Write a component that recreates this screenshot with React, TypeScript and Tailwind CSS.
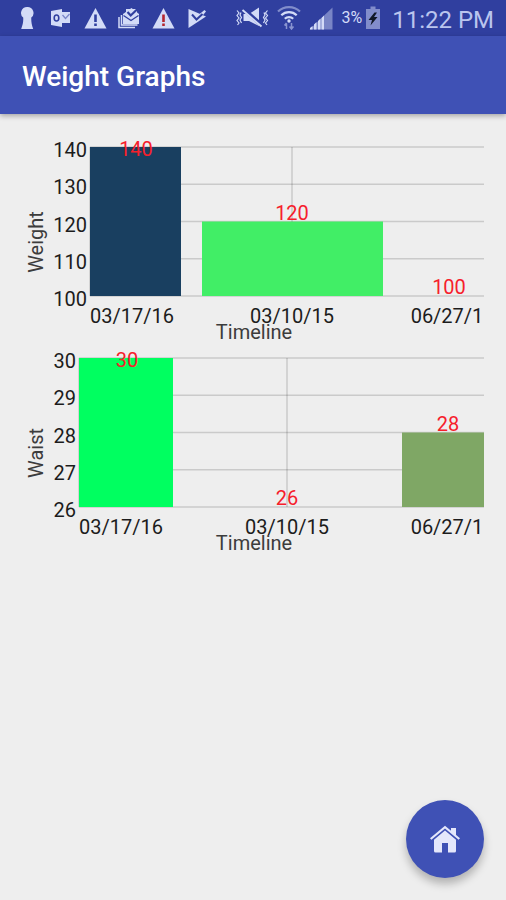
import type { ReactNode } from 'react';

type Bar = {
  value: number;
  label: string;
  center: number;
  labelCenter: number;
  left: number;
  width: number;
  color: string;
};

type ChartProps = {
  title: string;
  ticks: number[];
  axisX: number;
  bars: Bar[];
};

const PLOT_TOP = 9;
const PLOT_HEIGHT = 149;
const PLOT_BOTTOM = PLOT_TOP + PLOT_HEIGHT;
const PLOT_RIGHT = 462;

const weight: ChartProps = {
  title: 'Weight',
  ticks: [100, 110, 120, 130, 140],
  axisX: 68,
  bars: [
    { value: 140, label: '03/17/16', center: 114, labelCenter: 110, left: 68, width: 91, color: '#193f60' },
    { value: 120, label: '03/10/15', center: 270, labelCenter: 270, left: 180, width: 181, color: '#41ee66' },
    { value: 100, label: '06/27/1', center: 427, labelCenter: 425, left: 382, width: 80, color: '#7fa765' }
  ]
};

const waist: ChartProps = {
  title: 'Waist',
  ticks: [26, 27, 28, 29, 30],
  axisX: 57,
  bars: [
    { value: 30, label: '03/17/16', center: 105, labelCenter: 99, left: 57, width: 94, color: '#00ff60' },
    { value: 26, label: '03/10/15', center: 265, labelCenter: 265, left: 172, width: 186, color: '#41ee66' },
    { value: 28, label: '06/27/1', center: 426, labelCenter: 425, left: 380, width: 82, color: '#7fa765' }
  ]
};

const BarChart = ({ title, ticks, axisX, bars }: ChartProps) => {
  const min = ticks[0];
  const max = ticks[ticks.length - 1];
  const toY = (value: number) => PLOT_BOTTOM - ((value - min) / (max - min)) * PLOT_HEIGHT;

  return (
    <svg
      viewBox="0 0 462 211"
      className="block w-full font-['Roboto',sans-serif] text-[20px]"
      role="img"
      aria-label={title}
    >
      <g stroke="#000" strokeOpacity="0.15" strokeWidth="1.5">
        {ticks.map((tick) => (
          <line key={tick} x1={axisX} x2={PLOT_RIGHT} y1={toY(tick)} y2={toY(tick)} />
        ))}
        <line x1={axisX} x2={axisX} y1={PLOT_TOP} y2={PLOT_BOTTOM} />
        <line x1={bars[1].center} x2={bars[1].center} y1={PLOT_TOP} y2={PLOT_BOTTOM} />
      </g>
      {bars.map((bar) => (
        <rect
          key={bar.label}
          x={bar.left}
          y={toY(bar.value)}
          width={bar.width}
          height={PLOT_BOTTOM - toY(bar.value)}
          fill={bar.color}
        />
      ))}
      <g fill="#1c1c1c" textAnchor="end">
        {ticks.map((tick) => (
          <text key={tick} x={axisX - 3} y={toY(tick) + 10}>
            {tick}
          </text>
        ))}
      </g>
      <g fill="#1c1c1c" textAnchor="middle">
        {bars.map((bar) => (
          <text key={bar.label} x={bar.labelCenter} y="185">
            {bar.label}
          </text>
        ))}
      </g>
      <g fill="#f6202b" textAnchor="middle">
        {bars.map((bar) => (
          <text key={bar.label} x={bar.center} y={Math.max(toY(bar.value) - 2, PLOT_TOP + 9)}>
            {bar.value}
          </text>
        ))}
      </g>
      <g fill="#3c3c3c" textAnchor="middle">
        <text x="232" y="201">
          Timeline
        </text>
        <text transform="translate(21 104) rotate(-90)">{title}</text>
      </g>
    </svg>
  );
};

const Icon = ({ width, children }: { width: number; children: ReactNode }) => (
  <svg width={width} height="24" viewBox={`0 0 ${width} 24`} fill="currentColor" aria-hidden="true">
    {children}
  </svg>
);

const KeyholeIcon = () => (
  <Icon width={14}>
    <path d="M7 1a6 6 0 0 0-3.8 10.600c.3 3.500-.4 7-2 11.400h12c-1.600-4.400-2.100-7.900-1.900-11.400A6 6 0 0 0 7 1z" />
  </Icon>
);

const OutlookIcon = () => (
  <Icon width={20}>
    <path d="M0 5l11-2v18L0 19z" />
    <path d="M11 6h8v11h-8z" />
    <ellipse cx="5.5" cy="12" rx="2.3" ry="3" fill="none" stroke="#303f9f" strokeWidth="1.6" />
    <path d="M11.5 9l3 3.5L18.5 8" fill="none" stroke="#7a86c9" strokeWidth="1.3" />
  </Icon>
);

const WarningIcon = ({ mark }: { mark: string }) => (
  <Icon width={23}>
    <path d="M11.5 2L22.500 22.500H.5z" />
    <path d="M10.200 8.500h2.600v7.500h-2.600zM10.200 17.500h2.600V20h-2.600z" fill={mark} />
  </Icon>
);

const MailStackIcon = () => (
  <Icon width={22}>
    <path d="M1 11v10.500h16M3.500 9v10h16" fill="none" stroke="currentColor" strokeWidth="1.5" />
    <path d="M5 8l8.500-6L21 8v10H5z" />
    <path d="M5.500 9.500l7.500 5 7.500-5" fill="none" stroke="#303f9f" strokeWidth="1.3" />
    <path d="M8 3h11v6l-6 4-5-4z" />
    <path d="M9.500 6l3.200 3.500L19.500 3" fill="none" stroke="#303f9f" strokeWidth="2.2" />
  </Icon>
);

const PlayCheckIcon = () => (
  <Icon width={20}>
    <path d="M1.500 3L19 10.500 1.500 22z" />
    <path d="M12 8.500L17.500 4 19 5.500l-5 6z" />
    <path d="M5 8.500l4.500 5 6-5.500" fill="none" stroke="#303f9f" strokeWidth="2" />
  </Icon>
);

const VibrateMuteIcon = () => (
  <Icon width={33}>
    <path d="M7.500 8H13l10-6.500V20l-10-5H7.500z" />
    <path d="M8 3.500l18 16" stroke="#303f9f" strokeWidth="4" />
    <path d="M6.500 4L25.500 20.500" stroke="currentColor" strokeWidth="2" />
    <path
      d="M1 4.500L3 7 1 9.500 3 12l-2 2.500L3 17l-1.500 2M5 6.500L4 9l1.500 2.500L4 14l1.500 3M31.500 4.500l-2 2.500 2 2.500-2 2.500 2 2.500-2 2.500 1.500 2M28 6.500L29 9l-1.500 2.500L29 14l-1.500 3"
      fill="none"
      stroke="currentColor"
      strokeWidth="1.2"
    />
  </Icon>
);

const WifiIcon = () => (
  <Icon width={24}>
    <g fill="none" stroke="currentColor" strokeWidth="2.2">
      <path d="M1 5.500a16 16 0 0 1 22 0" opacity=".5" />
      <path d="M4.300 9.200a11 11 0 0 1 15.400 0" />
      <path d="M7.800 12.800a6 6 0 0 1 8.400 0" />
    </g>
    <circle cx="12" cy="15" r="1.7" />
    <path
      d="M9.500 23v-5.500M7.500 19.500l2-2.500M14.500 17v5.500M12.500 20.500l2 2.500 2-2.500"
      fill="none"
      stroke="currentColor"
      strokeWidth="1.5"
      opacity=".55"
    />
  </Icon>
);

const SignalIcon = () => (
  <Icon width={24}>
    <path d="M23.500 1.500v22H.5z" opacity=".45" />
    <path d="M1 23.500V22l2.500-2v3.500zM5 23.500v-5L7.500 16v7.500zM9 23.500V15l2.500-2.500v11zM12.500 23.500V12L15 9.500v14z" />
  </Icon>
);

const BatteryIcon = () => (
  <Icon width={14}>
    <path d="M4.500.5h5V3H14v20H0V3h4.500z" opacity=".5" />
    <path d="M8.500 6.500L2.500 14H6l-1.500 5.500 7-8.500H8l3-4.500z" fill="#111827" />
  </Icon>
);

const notifications = [
  <KeyholeIcon />,
  <OutlookIcon />,
  <WarningIcon mark="#303f9f" />,
  <MailStackIcon />,
  <WarningIcon mark="#b3262e" />,
  <PlayCheckIcon />
];

const StatusBar = () => (
  <div className="flex h-9 items-center justify-between bg-[#303f9f] pr-3 pl-[10px] text-[#d3dbf7]">
    <div className="flex items-center">
      {notifications.map((icon, index) => (
        <span key={index} className="flex w-[34px] justify-center">
          {icon}
        </span>
      ))}
    </div>
    <div className="flex items-center gap-2">
      <VibrateMuteIcon />
      <WifiIcon />
      <SignalIcon />
      <div className="flex items-center gap-1">
        <span className="text-base">3%</span>
        <BatteryIcon />
      </div>
      <span className="pt-1 pl-1 text-2xl text-[#bac5ee]">11:22 PM</span>
    </div>
  </div>
);

const HomeButton = () => (
  <button
    type="button"
    aria-label="Home"
    className="fixed right-[22px] bottom-[22px] flex size-[78px] items-center justify-center rounded-full bg-[#3f51b5] text-[#e4e7fb] shadow-[0_6px_8px_rgba(0,0,0,0.25)]"
  >
    <svg width="32" height="28" viewBox="0 0 32 28" fill="currentColor" aria-hidden="true">
      <path d="M22 3h5v8l-5-4z" />
      <path d="M1 13.200L16 .8l15 12.400-1.400 1.500L16 3.500 2.400 14.700z" />
      <path d="M16 5.500l11 9.200V26a1.500 1.500 0 0 1-1.500 1.500H19V18h-6v9.500H6.500A1.500 1.500 0 0 1 5 26V14.700z" />
    </svg>
  </button>
);

const App = () => {
  return (
    <div className="min-h-screen bg-[#eeeeee] font-['Roboto',sans-serif]">
      <StatusBar />
      <header className="flex h-[78px] items-center bg-[#3f51b5] px-[22px] pt-1 shadow-[0_2px_5px_rgba(0,0,0,0.3)]">
        <h1 className="text-[28px] font-medium text-white">Weight Graphs</h1>
      </header>
      <main className="px-[22px] pt-6">
        <BarChart {...weight} />
        <BarChart {...waist} />
      </main>
      <HomeButton />
    </div>
  );
};

export default App;
